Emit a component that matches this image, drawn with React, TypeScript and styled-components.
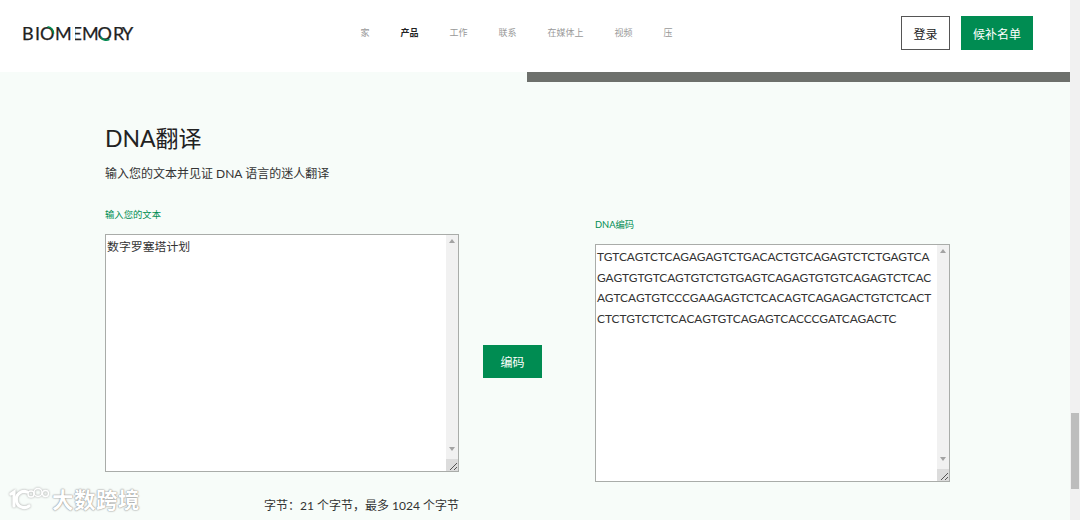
import React from 'react';
import styled, { createGlobalStyle } from 'styled-components';

const GREEN = '#008c52';
const CJK = '"Lato", "Noto Sans CJK SC", sans-serif';

const GlobalStyle = createGlobalStyle`
  html, body {
    margin: 0;
    padding: 0;
    height: 100%;
    overflow: hidden;
    background: #f7fcf9;
    font-family: ${CJK};
  }
`;

const Shell = styled.div`
  position: relative;
  display: flex;
  width: 1080px;
  height: 520px;
  overflow: hidden;
`;

const Main = styled.div`
  width: 1070px;
  display: flex;
  flex-direction: column;
`;

const PageScroll = styled.div`
  width: 10px;
  background: #f1f1f1;
  padding: 413px 1px 0;
  box-sizing: border-box;
`;

const PageThumb = styled.div`
  height: 76px;
  background: #bdbdbd;
`;

const Header = styled.header`
  height: 72px;
  background: #fff;
  display: flex;
  align-items: center;
  padding: 0 37px 6px 22px;
  box-sizing: border-box;
`;

const LogoBox = styled.div`
  width: 112px;
  height: 20px;
`;

const Nav = styled.nav`
  display: flex;
  gap: 31px;
  margin-left: 226.5px;
  flex: 1;
`;

const NavItem = styled.a<{ $active?: boolean }>`
  font-size: 9px;
  line-height: 12px;
  color: ${p => (p.$active ? '#222' : '#999')};
  font-weight: ${p => (p.$active ? 700 : 400)};
`;

const LoginButton = styled.button`
  width: 49px;
  height: 34px;
  margin-right: 11px;
  padding: 0;
  border: 1px solid #555;
  background: #fff;
  color: #222;
  font: 400 12px ${CJK};
`;

const WaitlistButton = styled.button`
  width: 72px;
  height: 34px;
  padding: 0;
  border: 0;
  background: ${GREEN};
  color: #fff;
  font: 400 12px ${CJK};
`;

const Strip = styled.div`
  height: 10px;
  margin-left: 527px;
  background: #6d706c;
`;

const Content = styled.main`
  flex: 1;
  padding: 43px 0 0 105px;
`;

const Heading = styled.h1`
  margin: 0;
  font-size: 23px;
  line-height: 26px;
  font-weight: 400;
  color: #222;
`;

const Lead = styled.p`
  margin: 15px 0 0;
  font-size: 12px;
  line-height: 16px;
  color: #333;
`;

const Columns = styled.div`
  display: flex;
  align-items: flex-start;
  margin-top: 27px;
`;

const Column = styled.div<{ $offset?: number; $width: number }>`
  width: ${p => p.$width}px;
  padding-top: ${p => p.$offset ?? 0}px;
  flex: none;
`;

const FieldLabel = styled.label`
  display: block;
  height: 12px;
  margin-bottom: 13px;
  font-size: 9.33px;
  line-height: 12px;
  color: ${GREEN};
`;

const Box = styled.div`
  position: relative;
  display: flex;
  height: 238px;
  box-sizing: border-box;
  border: 1px solid #a9aca9;
  background: #fff;
`;

const BoxText = styled.div<{ $dna?: boolean }>`
  flex: 1;
  min-width: 0;
  padding: ${p => (p.$dna ? '0 0 0 1px' : '0 1px')};
  font-size: 11.9px;
  line-height: ${p => (p.$dna ? '20.7px' : '23px')};
  color: #333;
  word-break: break-all;
`;

const DnaLines = styled.div`
  padding-top: 2px;
`;

const BoxScroll = styled.div`
  position: relative;
  width: 12px;
  flex: none;
  background: #f1f1f1;
  display: flex;
  flex-direction: column;
  align-items: center;
  justify-content: space-between;
  padding: 4px 0 20px;
  box-sizing: border-box;
`;

const Arrow = styled.span<{ $down?: boolean }>`
  width: 0;
  height: 0;
  border-left: 3px solid transparent;
  border-right: 3px solid transparent;
  ${p => (p.$down ? 'border-top: 4px solid #a3a3a3;' : 'border-bottom: 4px solid #a3a3a3;')}
`;

const Grip = styled.svg`
  position: absolute;
  right: 0;
  bottom: 0;
  width: 12px;
  height: 12px;
  background: #dcdcdc;
`;

const Count = styled.p`
  margin: 26px 0 0;
  text-align: right;
  font-size: 12px;
  line-height: 16px;
  color: #333;
`;

const EncodeButton = styled.button`
  width: 59px;
  height: 33px;
  flex: none;
  margin: 136px 53px 0 24px;
  padding: 0;
  border: 0;
  background: ${GREEN};
  color: #fff;
  font: 400 12px ${CJK};
`;

const Watermark = styled.div`
  position: absolute;
  left: 9px;
  bottom: 6px;
  display: flex;
  align-items: center;
  gap: 3px;
`;

const WatermarkIcon = styled.svg`
  filter: drop-shadow(0 0 1px #a0a0a0);
`;

const WatermarkText = styled.span`
  font-size: 21.5px;
  line-height: 26px;
  font-weight: 700;
  letter-spacing: 0.5px;
  color: #fff;
  text-shadow: 0 0 2px #8d8d8d, 0 0 1px #8d8d8d;
`;

const Logo = () => (
  <LogoBox>
    <svg width="112" height="20" viewBox="0 0 112 20" overflow="visible">
      <text
        x="0 13 18 33 49.5 60 75.5 91 100"
        y="16.5"
        fontFamily="Lato, sans-serif"
        fontSize="18"
        fill="#222"
        stroke="#222"
        strokeWidth="0.25"
      >
        BIOMEMORY
      </text>
      <rect x="50.4" y="2" width="2.6" height="16" fill="#fff" />
      <path d="M25.5 3.8a6.7 6.7 0 0 1 6 7" fill="none" stroke={GREEN} strokeWidth="1.6" />
      <path d="M78.5 14a6.8 6.8 0 0 0 9 2.4" fill="none" stroke={GREEN} strokeWidth="1.6" />
    </svg>
  </LogoBox>
);

const WatermarkLogo = () => (
  <WatermarkIcon width="40" height="28" viewBox="0 0 40 28">
    <g fill="none" stroke="#fff" strokeWidth="3.2" strokeLinecap="round">
      <path d="M2 8l3-2v14" />
      <path d="M18 6a8 8 0 1 0 2 14" />
    </g>
    <g fill="none" stroke="#fff" strokeWidth="1.4">
      <circle cx="22" cy="8" r="3" />
      <circle cx="29" cy="6.5" r="4" />
      <circle cx="36.5" cy="7.5" r="3" />
    </g>
  </WatermarkIcon>
);

const Scroller = () => (
  <BoxScroll>
    <Arrow />
    <Arrow $down />
    <Grip viewBox="0 0 12 12">
      <path d="M4 11l7-7M8 11l3-3" stroke="#555" strokeWidth="1" fill="none" />
    </Grip>
  </BoxScroll>
);

const navItems = ['家', '产品', '工作', '联系', '在媒体上', '视频', '压'];

const dnaLines = [
  'TGTCAGTCTCAGAGAGTCTGACACTGTCAGAGTCTCTGAGTCA',
  'GAGTGTGTCAGTGTCTGTGAGTCAGAGTGTGTCAGAGTCTCAC',
  'AGTCAGTGTCCCGAAGAGTCTCACAGTCAGAGACTGTCTCACT',
  'CTCTGTCTCTCACAGTGTCAGAGTCACCCGATCAGACTC',
];

export default function App() {
  return (
    <>
      <GlobalStyle />
      <Shell>
        <Main>
          <Header>
            <Logo />
            <Nav>
              {navItems.map(item => (
                <NavItem key={item} $active={item === '产品'}>
                  {item}
                </NavItem>
              ))}
            </Nav>
            <LoginButton>登录</LoginButton>
            <WaitlistButton>候补名单</WaitlistButton>
          </Header>
          <Strip />
          <Content>
            <Heading>DNA翻译</Heading>
            <Lead>输入您的文本并见证 DNA 语言的迷人翻译</Lead>
            <Columns>
              <Column $width={354}>
                <FieldLabel>输入您的文本</FieldLabel>
                <Box>
                  <BoxText>数字罗塞塔计划</BoxText>
                  <Scroller />
                </Box>
                <Count>字节：21 个字节，最多 1024 个字节</Count>
              </Column>
              <EncodeButton>编码</EncodeButton>
              <Column $width={355} $offset={10}>
                <FieldLabel>DNA编码</FieldLabel>
                <Box>
                  <BoxText $dna>
                    <DnaLines>
                      {dnaLines.map(line => (
                        <div key={line}>{line}</div>
                      ))}
                    </DnaLines>
                  </BoxText>
                  <Scroller />
                </Box>
              </Column>
            </Columns>
          </Content>
        </Main>
        <PageScroll>
          <PageThumb />
        </PageScroll>
        <Watermark>
          <WatermarkLogo />
          <WatermarkText>大数跨境</WatermarkText>
        </Watermark>
      </Shell>
    </>
  );
}
